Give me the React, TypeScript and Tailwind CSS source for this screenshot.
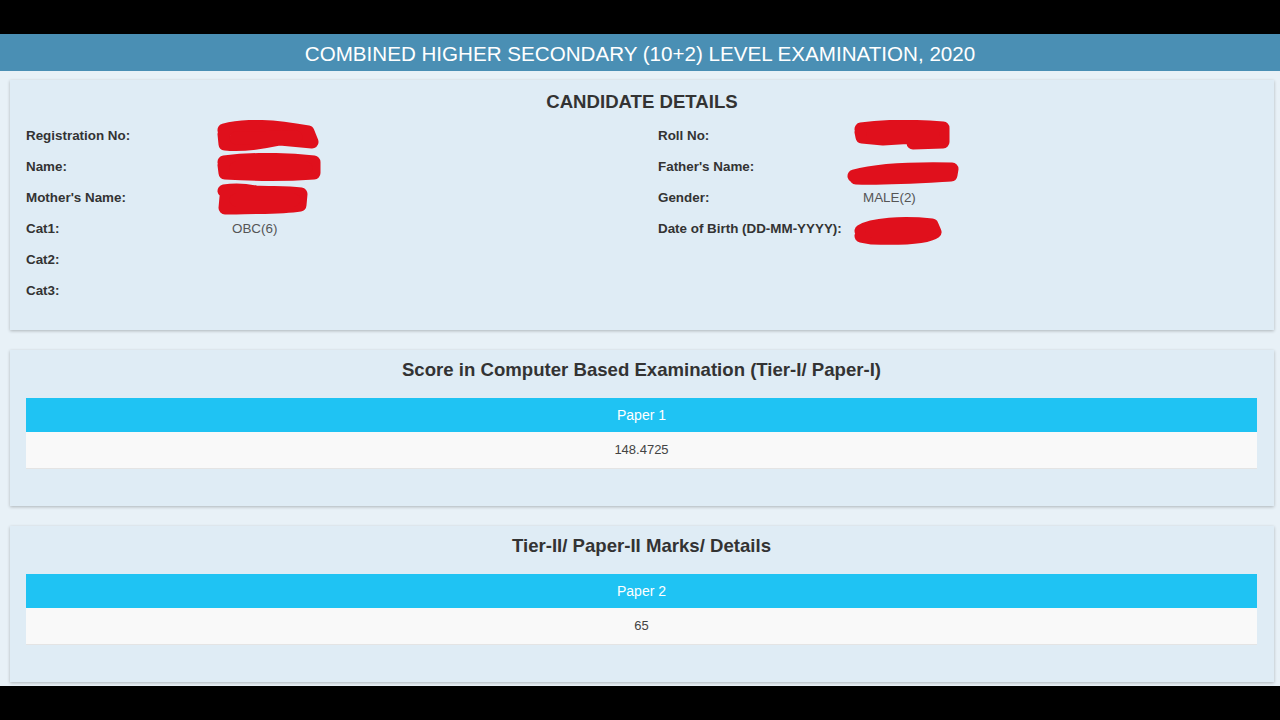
import React from 'react'

// Red marker scribble used to hide personal data
function Scribble({ w, h, lines, className }: { w: number; h: number; lines: string[]; className?: string }) {
  return (
    <svg width={w} height={h} viewBox={`0 0 ${w} ${h}`} className={className}>
      {lines.map((d, i) => (
        <path key={i} d={d} stroke="#e0101c" strokeWidth={13} strokeLinecap="round" strokeLinejoin="round" fill="none" />
      ))}
    </svg>
  )
}

const leftRows = [
  { label: 'Registration No:', value: '', mark: 'reg' },
  { label: 'Name:', value: '', mark: 'name' },
  { label: "Mother's Name:", value: '', mark: 'mother' },
  { label: 'Cat1:', value: 'OBC(6)' },
  { label: 'Cat2:', value: '' },
  { label: 'Cat3:', value: '' },
]

const rightRows = [
  { label: 'Roll No:', value: '', mark: 'roll' },
  { label: "Father's Name:", value: '', mark: 'father' },
  { label: 'Gender:', value: 'MALE(2)' },
  { label: 'Date of Birth (DD-MM-YYYY):', value: '', mark: 'dob' },
]

function Mark({ kind }: { kind?: string }) {
  switch (kind) {
    case 'reg':
      return <Scribble w={106} h={34} className="absolute left-[-16px] top-[-17px]" lines={['M8 10 C30 4 60 6 92 12 L96 22 L64 19 C50 22 30 26 9 24 L8 14', 'M20 18 L80 17']} />
    case 'name':
      return <Scribble w={108} h={30} className="absolute left-[-16px] top-[-15px]" lines={['M8 9 C40 5 70 6 98 9 L98 20 C70 22 40 22 9 20 L8 12', 'M20 15 L90 15']} />
    case 'mother':
      return <Scribble w={96} h={32} className="absolute left-[-16px] top-[-16px]" lines={['M8 8 C20 6 30 7 40 9 C55 10 70 9 85 11 L84 22 C65 25 40 24 20 25 L9 25 L10 14', 'M20 17 L78 17']} />
    case 'roll':
      return <Scribble w={100} h={34} className="absolute left-[-10px] top-[-17px]" lines={['M8 9 C35 5 65 6 90 8 L90 22 L60 23 L62 17 L30 19 L9 17 L8 12', 'M20 14 L80 14']} />
    case 'father':
      return <Scribble w={116} h={24} className="absolute left-[-17px] top-[-7px]" lines={['M8 15 C30 9 60 7 106 8 L105 14 C70 16 40 18 10 17']} />
    case 'dob':
      return <Scribble w={92} h={30} className="absolute left-[-11px] top-[-14px]" lines={['M9 15 C20 8 50 6 80 9 L83 16 C75 22 50 23 20 22 L9 20', 'M20 15 L75 15']} />
    default:
      return null
  }
}

function Row({ label, value, mark, labelW }: { label: string; value: string; mark?: string; labelW: string }) {
  return (
    <div className="flex h-[31px] items-center">
      <div className={`${labelW} text-[13.4px] font-bold text-[#333]`}>{label}</div>
      <div className="relative text-[13.4px] text-[#555]">
        {value}
        <Mark kind={mark} />
      </div>
    </div>
  )
}

function ScorePanel({ title, paper, score }: { title: string; paper: string; score: string }) {
  return (
    <div className="ml-[10px] mr-[6px] bg-[#dfecf5] pl-4 pr-[17px] shadow-[0_1px_3px_rgba(0,0,0,0.25)]">
      <h2 className="h-[40px] text-center text-[18.6px] leading-[40px] font-bold text-[#333]">{title}</h2>
      <div className="mt-[8px] flex h-[34px] items-center justify-center bg-[#1fc3f3] text-[14px] text-white">{paper}</div>
      <div className="flex h-[37px] items-center justify-center border-b border-[#e4e4e4] bg-[#f9f9f9] text-[13px] text-[#444]">{score}</div>
      <div className="h-[37px]" />
    </div>
  )
}

export default function App() {
  return (
    <div className="flex h-[720px] w-[1280px] flex-col bg-black" style={{ fontFamily: '"Liberation Sans", Arial, sans-serif' }}>
      <div className="h-[34px]" />
      <div className="flex h-[652px] flex-col gap-[20px] bg-[#e8f1f7]">
        <div>
          {/* Exam title band */}
          <div className="flex h-[37px] items-center justify-center bg-[#4a8fb4] pt-[3px] text-[20.6px] text-white">
            COMBINED HIGHER SECONDARY (10+2) LEVEL EXAMINATION, 2020
          </div>

          {/* Candidate details */}
          <div className="ml-[10px] mr-[6px] mt-[9px] h-[250px] bg-[#dfecf5] px-4 pt-[8px] shadow-[0_1px_3px_rgba(0,0,0,0.25)]">
            <h2 className="h-[28px] text-center text-[18.6px] leading-[28px] font-bold text-[#333]">CANDIDATE DETAILS</h2>
            <div className="mt-[5px] flex">
              <div className="w-[632px]">
                {leftRows.map(r => (
                  <Row key={r.label} {...r} labelW="w-[206px]" />
                ))}
              </div>
              <div>
                {rightRows.map(r => (
                  <Row key={r.label} {...r} labelW="w-[205px]" />
                ))}
              </div>
            </div>
          </div>
        </div>

        <ScorePanel title="Score in Computer Based Examination (Tier-I/ Paper-I)" paper="Paper 1" score="148.4725" />
        <ScorePanel title="Tier-II/ Paper-II Marks/ Details" paper="Paper 2" score="65" />
      </div>
    </div>
  )
}
